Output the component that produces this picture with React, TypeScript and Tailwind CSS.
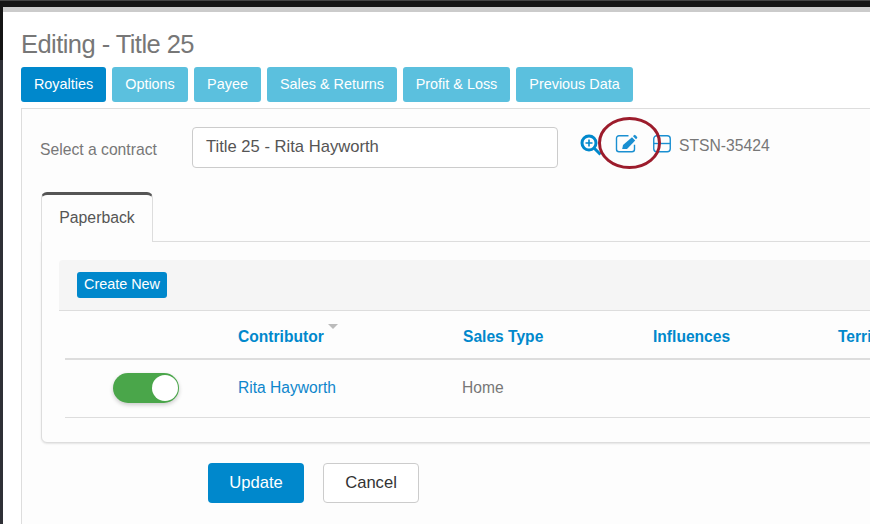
const tabs: [string, string][] = [
  ["Options", "w-[76px]"],
  ["Payee", "w-[67px]"],
  ["Sales & Returns", "w-[130px]"],
  ["Profit & Loss", "w-[107px]"],
  ["Previous Data", "w-[117px]"],
];

function ZoomIcon() {
  return (
    <svg className="ml-[21px] mt-[25px] shrink-0" width="24" height="24" viewBox="0 0 24 24" fill="none" stroke="#0088cc">
      <circle cx="10" cy="9" r="7" strokeWidth="3" />
      <path d="M10 5.5v7M6.5 9h7" strokeWidth="1.6" />
      <path d="M15.5 14.5L21.5 20.5" strokeWidth="3" />
    </svg>
  );
}

function EditIcon() {
  return (
    <svg className="ml-[12px] mt-[25px] shrink-0" width="24" height="20" viewBox="0 0 24 20" fill="none">
      <path d="M13.5 1.75H4a2.5 2.5 0 0 0-2.5 2.5v11a2.5 2.5 0 0 0 2.5 2.5h13a2.5 2.5 0 0 0 2.5-2.5v-4.5" stroke="#1a8fd1" strokeWidth="1.4" />
      <path d="M7.2 15l.8-4L17 3.2l3.2 3.2L12 15z" fill="#1a8fd1" />
      <path d="M18 2.2l1-1a1 1 0 0 1 1.4 0l1.6 1.6a1 1 0 0 1 0 1.4l-1 1z" fill="#1a8fd1" />
    </svg>
  );
}

function MinusIcon() {
  return (
    <svg className="ml-[13px] mt-[26px] shrink-0" width="19" height="18" viewBox="0 0 19 18" fill="none" stroke="#1a8fd1" strokeWidth="1.4">
      <rect x="1.75" y="0.75" width="16.5" height="16" rx="3" />
      <path d="M1.75 8.5h16.5" />
    </svg>
  );
}

export default function App() {
  return (
    <div className="relative h-[524px] w-[870px] overflow-hidden bg-white font-['Liberation_Sans',Arial,sans-serif] text-[14.4px] text-[#555]">
      <div className="h-[7px] border-t border-[#444] bg-[#141414]" />
      <div className="flex h-[517px]">
        <div className="w-[3px] shrink-0">
          <div className="h-[53px] bg-[#141414]" />
          <div className="h-[464px] bg-[#2f3036]" />
        </div>
        <div className="w-[867px] shrink-0">
          <div className="h-[5px] bg-[#cbcbcb]" />
          <div className="w-[1100px] pl-[18px]">
            <h1 className="mt-[17px] h-[30px] text-[25.5px] leading-[30px] tracking-[-0.55px] text-[#777]">Editing - Title 25</h1>
            <div className="mt-[8px] flex h-[35px] gap-[6px]">
              <button className="h-[35px] w-[85px] rounded-[3px] bg-[#0088cc] text-center text-white">Royalties</button>
              {tabs.map(([t, w]) => (
                <button key={t} className={`h-[35px] rounded-[3px] bg-[#5bc0de] text-center text-white ${w}`}>{t}</button>
              ))}
            </div>
            <div className="mt-[6px] h-[500px] border border-[#ddd] bg-[#fdfdfd] pl-[19px]">
              <div className="flex h-[83px] items-start">
                <label className="-ml-px mt-[32px] w-[152px] text-[15.7px] leading-[18px] text-[#777]">Select a contract</label>
                <div className="mt-[18px] flex h-[41px] w-[366px] items-center rounded-[4px] border border-[#ccc] bg-white pl-[13px] text-[16.6px] text-[#555]">Title 25 - Rita Hayworth</div>
                <ZoomIcon />
                <EditIcon />
                <MinusIcon />
                <span className="ml-[8px] mt-[28px] text-[15.7px] leading-[18px] text-[#777]">STSN-35424</span>
              </div>
              <div className="relative z-10 h-[50px] w-[112px] rounded-t-[6px] border-x border-t-[3px] border-x-[#ddd] border-t-[#555] bg-[#fdfdfd] pt-[13px] text-center text-[15.8px] leading-[20px]">Paperback</div>
              <div className="-mt-px h-[202px] rounded-b-[6px] border border-[#ddd] bg-[#fdfdfd] px-[17px] pt-[18px] shadow-[0_1px_2px_rgba(0,0,0,0.1)]">
                <div className="h-[51px] rounded-t-[4px] border-b border-[#ddd] bg-[#f5f5f5] pl-[18px] pt-[12px]">
                  <button className="h-[26px] w-[90px] rounded-[3px] bg-[#0088cc] text-center text-white">Create New</button>
                </div>
                <div className="ml-[6px]">
                  <div className="flex h-[49px] items-center border-b-2 border-[#ddd] pt-[5px] text-[15.6px] font-bold text-[#0088cc]">
                    <div className="w-[173px] shrink-0" />
                    <div className="relative w-[225px] shrink-0">
                      Contributor
                      <span className="absolute left-[90px] top-[-1px] h-0 w-0 border-x-[5px] border-t-[5px] border-x-transparent border-t-[#bbb]" />
                    </div>
                    <div className="w-[190px] shrink-0">Sales Type</div>
                    <div className="w-[185px] shrink-0">Influences</div>
                    <div>Territory</div>
                  </div>
                  <div className="flex h-[58px] items-center border-b border-[#ddd] pb-px text-[15.6px]">
                    <div className="w-[173px] shrink-0 pl-[48px]">
                      <div className="flex h-[30px] w-[66px] items-center justify-end rounded-full bg-[#4aa64a] pr-[1px] shadow-[0_2px_4px_rgba(0,0,0,0.2)]">
                        <div className="h-[26px] w-[26px] rounded-full bg-white" />
                      </div>
                    </div>
                    <div className="w-[224px] shrink-0 text-[#0e86cc]">Rita Hayworth</div>
                    <div className="text-[#777]">Home</div>
                  </div>
                </div>
              </div>
              <div className="ml-[167px] mt-[20px] flex gap-[19px] text-[16.6px]">
                <button className="h-[40px] w-[96px] rounded-[4px] bg-[#0088cc] text-center text-white">Update</button>
                <button className="h-[40px] w-[96px] rounded-[4px] border border-[#ccc] bg-white text-center text-[#333]">Cancel</button>
              </div>
            </div>
          </div>
        </div>
      </div>
      <svg className="absolute left-[590px] top-[112px]" width="80" height="62" viewBox="0 0 80 62" fill="none">
        <ellipse cx="39.5" cy="31" rx="30" ry="24.5" stroke="#9c1c2c" strokeWidth="3" />
      </svg>
    </div>
  );
}
